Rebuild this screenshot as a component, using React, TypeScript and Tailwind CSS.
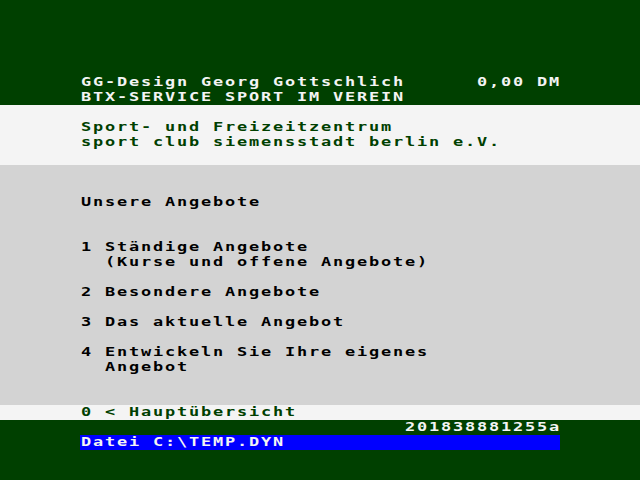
import React from 'react';

// BTX screen: 40 columns x 12px, rows of 15px, centred in 640px
function Row({ text = '', className = '', inner = '' }: { text?: string; className?: string; inner?: string }) {
  const chars = Array.from(text.padEnd(40, ' ')).slice(0, 40);
  return (
    <div className={`h-[15px] leading-[13px] ${className}`}>
      <div className={`mx-auto flex w-[480px] h-[15px] ${inner}`}>
        {chars.map((ch, i) => (
          <span key={i} className="w-3 shrink-0 text-center whitespace-pre scale-x-[1.3]">
            {ch}
          </span>
        ))}
      </div>
    </div>
  );
}

export default function App() {
  return (
    <div className="w-[640px] h-[480px] overflow-hidden font-['DejaVu_Sans_Mono',monospace] text-[13px] font-bold">
      {/* header */}
      <div className="bg-[#004000] text-[#f4f4f4] pt-[75px]">
        <Row text="GG-Design Georg Gottschlich      0,00 DM" />
        <Row text="BTX-SERVICE SPORT IM VEREIN" />
      </div>

      {/* title band */}
      <div className="bg-[#f4f4f4] text-[#004000] py-[15px]">
        <Row text="Sport- und Freizeitzentrum" />
        <Row text="sport club siemensstadt berlin e.V." />
      </div>

      {/* menu */}
      <div className="bg-[#d3d3d3] text-black pt-[30px] pb-[30px]">
        <Row text="Unsere Angebote" />
        <div className="h-[30px]" />
        <Row text="1 Ständige Angebote" />
        <Row text="  (Kurse und offene Angebote)" />
        <div className="h-[15px]" />
        <Row text="2 Besondere Angebote" />
        <div className="h-[15px]" />
        <Row text="3 Das aktuelle Angebot" />
        <div className="h-[15px]" />
        <Row text="4 Entwickeln Sie Ihre eigenes" />
        <Row text="  Angebot" />
      </div>

      <Row text="0 < Hauptübersicht" className="bg-[#f4f4f4] text-[#004000]" />

      {/* status lines */}
      <div className="bg-[#004000] text-[#f4f4f4] h-[60px]">
        <Row text="                           201838881255a" />
        <Row text="Datei C:\TEMP.DYN" inner="bg-[#0000ff]" />
      </div>
    </div>
  );
}
